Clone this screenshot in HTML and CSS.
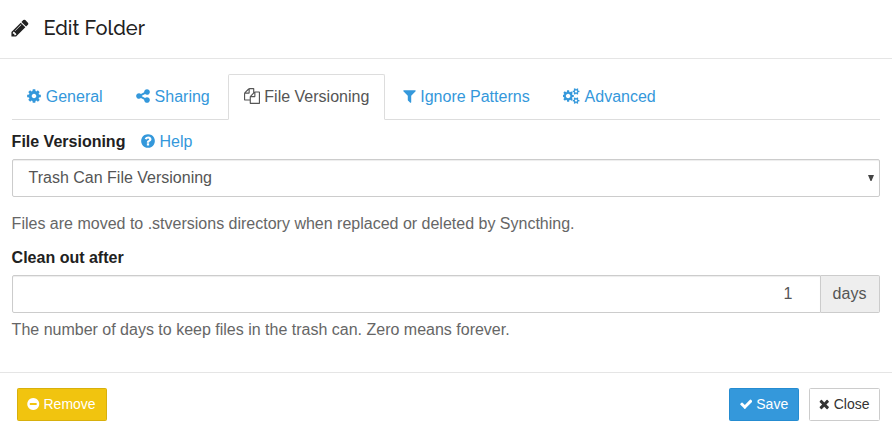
FILE: index.html
```html
<!DOCTYPE html>
<html lang="en">
<head>
<meta charset="utf-8">
<title>Edit Folder</title>
<link rel="stylesheet" href="styles.css">
</head>
<body>
<div class="modal">
  <header class="modal-header">
    <svg class="icon icon-title" viewBox="128 0 1536 1792"><path d="M491 1536l91-91-235-235-91 91v107h128v128h107zm523-928q0-22-22-22-10 0-17 7l-542 542q-7 7-7 17 0 22 22 22 10 0 17-7l542-542q7-7 7-17zm-54-192l416 416-832 832h-416v-416zm683 96q0 53-37 90l-166 166-416-416 166-165q36-38 90-38 53 0 91 38l235 234q37 39 37 91z"/></svg>
    <h4 class="modal-title">Edit Folder</h4>
  </header>
  <main class="modal-body">
    <nav class="tabs">
      <a class="tab"><svg class="icon" viewBox="128 0 1536 1792"><path d="M1152 896q0-106-75-181t-181-75-181 75-75 181 75 181 181 75 181-75 75-181zm512-109v222q0 12-8 23t-20 13l-185 28q-19 54-39 91 35 50 107 138 10 12 10 25t-9 23q-27 37-99 108t-94 71q-12 0-26-9l-138-108q-44 23-91 38-16 136-29 186-7 28-36 28h-222q-14 0-24.5-8.5t-11.5-21.5l-28-184q-49-16-90-37l-141 107q-10 9-25 9-14 0-25-11-126-114-165-168-7-10-7-23 0-12 8-23 15-21 51-66.5t54-70.5q-27-50-41-99l-183-27q-13-2-21-12.5t-8-23.5v-222q0-12 8-23t19-13l186-28q14-46 39-92-40-57-107-138-10-12-10-24 0-10 9-23 26-36 98.5-107.5t94.5-71.5q13 0 26 10l138 107q44-23 91-38 16-136 29-186 7-28 36-28h222q14 0 24.5 8.5t11.5 21.5l28 184q49 16 90 37l142-107q9-9 24-9 13 0 25 10 129 119 165 170 7 8 7 22 0 12-8 23-15 21-51 66.5t-54 70.5q26 50 41 98l183 28q13 2 21 12.5t8 23.5z"/></svg><span>General</span></a>
      <a class="tab"><svg class="icon" viewBox="128 0 1536 1792"><path d="M1344 1024q133 0 226.500 93.500t93.500 226.500-93.500 226.500-226.500 93.500-226.500-93.500-93.500-226.500q0-12 2-34l-360-180q-92 86-218 86-133 0-226.500-93.500t-93.500-226.500 93.500-226.500 226.500-93.500q126 0 218 86l360-180q-2-22-2-34 0-133 93.500-226.500t226.500-93.500 226.500 93.500 93.500 226.500-93.500 226.500-226.500 93.500q-126 0-218-86l-360 180q2 22 2 34t-2 34l360 180q92-86 218-86z"/></svg><span>Sharing</span></a>
      <a class="tab tab-active"><svg class="icon icon-wide" viewBox="0 0 1792 1792"><path d="M1696 384q40 0 68 28t28 68v1216q0 40-28 68t-68 28h-960q-40 0-68-28t-28-68v-288h-544q-40 0-68-28t-28-68v-672q0-40 20-88t48-76l408-408q28-28 76-48t88-20h416q40 0 68 28t28 68v328q68-40 128-40h416zm-544 213l-299 299h299v-299zm-640-384l-299 299h299v-299zm196 647l316-316v-416h-384v416q0 40-28 68t-68 28h-416v640h512v-256q0-40 20-88t48-76zm956 804v-1152h-384v416q0 40-28 68t-68 28h-416v640h896z"/></svg><span>File Versioning</span></a>
      <a class="tab"><svg class="icon icon-filter" viewBox="192 0 1408 1792"><path d="M1595 295q17 41-14 70l-493 493v742q0 42-39 59-13 5-25 5-27 0-45-19l-256-256q-19-19-19-45v-486l-493-493q-31-29-14-70 17-39 59-39h1280q42 0 59 39z"/></svg><span>Ignore Patterns</span></a>
      <a class="tab"><svg class="icon icon-cogs" viewBox="0 0 1920 1792"><path d="M832 896q0-106-75-181t-181-75-181 75-75 181 75 181 181 75 181-75 75-181zm768 512q0-52-38-90t-90-38-90 38-38 90q0 53 37.500 90.500t90.500 37.500 90.500-37.500 37.500-90.500zm0-1024q0-52-38-90t-90-38-90 38-38 90q0 53 37.500 90.500t90.500 37.500 90.500-37.500 37.500-90.500zm-384 421v185q0 10-7 19.500t-16 10.500l-155 24q-11 35-32 76 34 48 90 115 7 11 7 20 0 12-7 19-23 30-82.500 89.500t-78.500 59.500q-11 0-21-7l-115-90q-37 19-77 31-11 108-23 155-7 24-30 24h-186q-11 0-20-7.500t-10-17.500l-23-153q-34-10-75-31l-118 89q-7 7-20 7-11 0-21-8-144-133-144-160 0-9 7-19 10-14 41-53t47-61q-23-44-35-82l-152-24q-10-1-17-9.500t-7-19.500v-185q0-10 7-19.500t16-10.500l155-24q11-35 32-76-34-48-90-115-7-11-7-20 0-12 7-20 22-30 82-89t79-59q11 0 21 7l115 90q34-18 77-32 11-108 23-154 7-24 30-24h186q11 0 20 7.500t10 17.500l23 153q34 10 75 31l118-89q8-7 20-7 11 0 21 8 144 133 144 160 0 8-7 19-12 16-42 54t-45 60q23 48 34 82l152 23q10 2 17 10.500t7 19.500zm640 533v140q0 16-149 31-12 27-30 52 51 113 51 138 0 4-4 7-122 71-124 71-8 0-46-47t-52-68q-20 2-30 2t-30-2q-14 21-52 68t-46 47q-2 0-124-71-4-3-4-7 0-25 51-138-18-25-30-52-149-15-149-31v-140q0-16 149-31 13-29 30-52-51-113-51-138 0-4 4-7 4-2 35-20t59-34 30-16q8 0 46 46.500t52 67.500q20-2 30-2t30 2q51-71 92-112l6-2q4 0 124 70 4 3 4 7 0 25-51 138 17 23 30 52 149 15 149 31zm0-1024v140q0 16-149 31-12 27-30 52 51 113 51 138 0 4-4 7-122 71-124 71-8 0-46-47t-52-68q-20 2-30 2t-30-2q-14 21-52 68t-46 47q-2 0-124-71-4-3-4-7 0-25 51-138-18-25-30-52-149-15-149-31v-140q0-16 149-31 13-29 30-52-51-113-51-138 0-4 4-7 4-2 35-20t59-34 30-16q8 0 46 46.500t52 67.500q20-2 30-2t30 2q51-71 92-112l6-2q4 0 124 70 4 3 4 7 0 25-51 138 17 23 30 52 149 15 149 31z"/></svg><span>Advanced</span></a>
    </nav>
    <div class="label-row">
      <span class="label">File Versioning</span>
      <a class="help-link"><svg class="icon" viewBox="128 0 1536 1792"><path d="M1024 1376v-192q0-14-9-23t-23-9h-192q-14 0-23 9t-9 23v192q0 14 9 23t23 9h192q14 0 23-9t9-23zm256-672q0-88-55.500-163t-138.500-116-170-41q-243 0-371 213-15 24 8 42l132 100q7 6 19 6 16 0 25-12 53-68 86-92 34-24 86-24 48 0 85.500 26t37.500 59q0 38-20 61t-68 45q-63 28-115.500 86.500t-52.500 125.500v36q0 14 9 23t23 9h192q14 0 23-9t9-23q0-19 21.500-49.500t54.500-49.500q32-18 49-28.500t46-35 44.500-48 28-60.500 12.500-81zm384 192q0 209-103 385.500t-279.500 279.500-385.500 103-385.500-103-279.500-279.500-103-385.500 103-385.500 279.500-279.500 385.500-103 385.500 103 279.500 279.500 103 385.500z"/></svg><span>Help</span></a>
    </div>
    <div class="control select"><span>Trash Can File Versioning</span><svg class="arrow" viewBox="0 0 6 6"><path d="M0 0h6L3.500 6h-1z"/></svg></div>
    <p class="help-text help-type">Files are moved to .stversions directory when replaced or deleted by Syncthing.</p>
    <div class="label-row"><span class="label">Clean out after</span></div>
    <div class="input-group">
      <div class="control number">1</div>
      <div class="addon">days</div>
    </div>
    <p class="help-text help-days">The number of days to keep files in the trash can. Zero means forever.</p>
  </main>
  <footer class="modal-footer">
    <button class="btn btn-warning"><svg class="icon" viewBox="128 0 1536 1792"><path d="M1344 960v-128q0-26-19-45t-45-19h-768q-26 0-45 19t-19 45v128q0 26 19 45t45 19h768q26 0 45-19t19-45zm320-64q0 209-103 385.500t-279.500 279.500-385.500 103-385.500-103-279.500-279.500-103-385.500 103-385.500 279.500-279.500 385.500-103 385.500 103 279.500 279.500 103 385.500z"/></svg><span>Remove</span></button>
    <div class="actions">
      <button class="btn btn-primary"><svg class="icon icon-check" viewBox="121 0 1550 1792"><path d="M1671 566q0 40-28 68l-724 724-136 136q-28 28-68 28t-68-28l-136-136-362-362q-28-28-28-68t28-68l136-136q28-28 68-28t68 28l294 295 656-657q28-28 68-28t68 28l136 136q28 28 28 68z"/></svg><span>Save</span></button>
      <button class="btn btn-default"><svg class="icon icon-times" viewBox="302 0 1188 1792"><path d="M1490 1322q0 40-28 68l-136 136q-28 28-68 28t-68-28l-294-294-294 294q-28 28-68 28t-68-28l-136-136q-28-28-28-68t28-68l294-294-294-294q-28-28-28-68t28-68l136-136q28-28 68-28t68 28l294 294 294-294q28-28 68-28t68 28l136 136q28 28 28 68t-28 68l-294 294 294 294q28 28 28 68z"/></svg><span>Close</span></button>
    </div>
  </footer>
</div>
</body>
</html>
```
FILE: styles.css
```css
* { box-sizing: border-box; }
body {
  margin: 0;
  background: #fff;
  color: #212121;
  font: 16px/23px "Liberation Sans", Arial, sans-serif;
}
.modal { height: 433px; }
.icon {
  flex: none;
  width: 14px;
  height: 16px;
  fill: currentColor;
}
.icon-wide { width: 16px; }
.icon-filter { width: 13px; }
.icon-cogs { width: 17px; }

.modal-header {
  display: flex;
  align-items: center;
  height: 59px;
  padding: 0 11px 3px;
  border-bottom: 1px solid #e5e5e5;
}
.icon-title { width: 18px; height: 20px; margin-right: 14.4px; }
.modal-title {
  margin: 0;
  font: 500 20px/24px Raleway, Lato, sans-serif;
}

.modal-body { height: 313px; padding: 15px 12px 0; }
.tabs {
  display: flex;
  gap: 2px;
  height: 46px;
  border-bottom: 1px solid #ddd;
}
.tab {
  display: flex;
  align-items: center;
  gap: 4.5px;
  height: 46px;
  padding: 0 15.2px 1px 14.25px;
  border: 1px solid transparent;
  border-radius: 2px 2px 0 0;
  color: #3498db;
  white-space: nowrap;
}
.tab .icon { margin-bottom: 1px; }
.tab-active {
  padding-left: 14.9px;
  border-color: #ddd #ddd #fff;
  background: #fff;
  color: #555;
}
.label-row {
  display: flex;
  height: 23px;
  margin: 10px 0 6px -0.4px;
}
.label { font-weight: 700; }
.help-link {
  display: flex;
  align-items: center;
  gap: 4.5px;
  margin-left: 15.5px;
  color: #3498db;
}
.help-link .icon { margin-bottom: 1px; }
.control {
  display: flex;
  align-items: center;
  height: 38px;
  padding: 0 5px 2px 15.5px;
  border: 1px solid #ccc;
  border-radius: 2px;
  box-shadow: inset 0 1px 1px rgba(0, 0, 0, 0.075);
  color: #555;
}
.select { justify-content: space-between; }
.arrow { width: 6px; height: 6px; margin-top: 2px; fill: #444; }
.help-text { margin: 0 0 0 -0.4px; color: #666; }
.help-type { margin-top: 15px; }
.help-type + .label-row { margin-top: 11px; }
.input-group { display: flex; }
.number {
  flex: 1;
  justify-content: flex-end;
  padding-right: 27.5px;
  border-radius: 2px 0 0 2px;
}
.addon {
  width: 59px;
  padding: 6px 1px 6px 0;
  border: 1px solid #ccc;
  border-left: 0;
  border-radius: 0 2px 2px 0;
  background: #eee;
  color: #555;
  text-align: center;
}
.help-days { margin-top: 5px; }

.modal-footer {
  display: flex;
  align-items: flex-start;
  justify-content: space-between;
  padding: 15px 12px 0 17px;
  border-top: 1px solid #e5e5e5;
}
.actions { display: flex; gap: 10px; }
.btn {
  display: flex;
  align-items: center;
  gap: 4px;
  height: 33px;
  padding: 0 10px 1px 9px;
  border: 1px solid;
  border-radius: 1.5px;
  font: 14px/20px "Liberation Sans", Arial, sans-serif;
}
.btn .icon { width: 12.5px; height: 14px; }
.btn .icon-check { width: 12.5px; }
.btn .icon-times { width: 10.5px; }
.btn-warning { padding-right: 10.5px; border-color: #d8b00c; background: #f1c40f; color: #fff; }
.btn-primary { padding-left: 9.7px; border-color: #258cd1; background: #3498db; color: #fff; }
.btn-default { padding-right: 9.5px; border-color: #ccc; background: #fff; color: #333; }
```
